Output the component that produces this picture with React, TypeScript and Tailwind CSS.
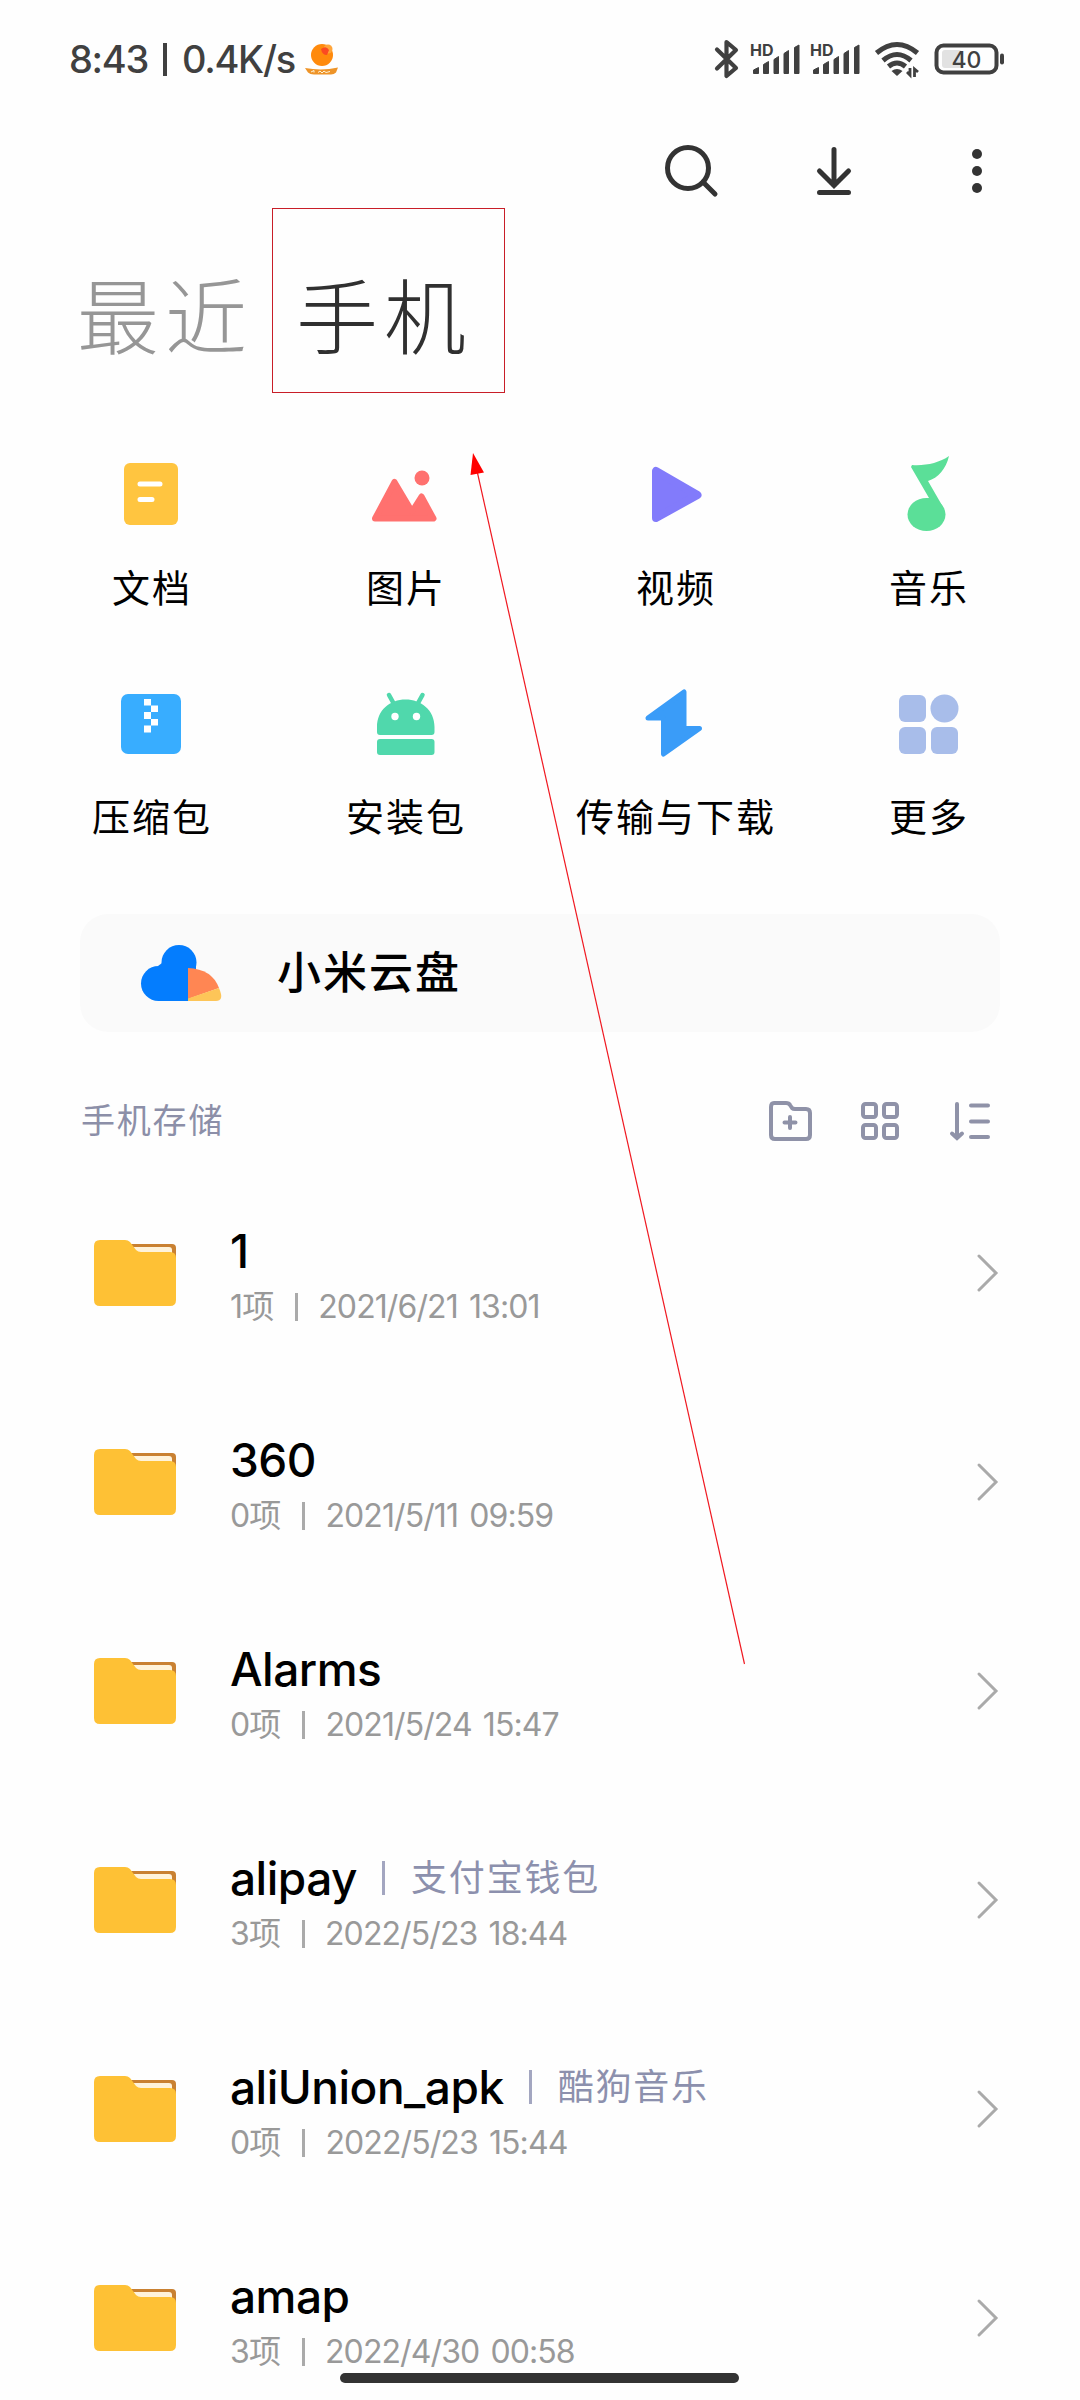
import type { ReactNode } from "react";

interface Category {
  label: string;
  icon: ReactNode;
}

interface Folder {
  name: string;
  count: string;
  date: string;
  tag?: string;
}

const categories: Category[] = [
  { label: "文档", icon: <DocIcon /> },
  { label: "图片", icon: <PictureIcon /> },
  { label: "视频", icon: <VideoIcon /> },
  { label: "音乐", icon: <MusicIcon /> },
  { label: "压缩包", icon: <ZipIcon /> },
  { label: "安装包", icon: <ApkIcon /> },
  { label: "传输与下载", icon: <TransferIcon /> },
  { label: "更多", icon: <MoreIcon /> },
];

const folders: Folder[] = [
  { name: "1", count: "1", date: "2021/6/21 13:01" },
  { name: "360", count: "0", date: "2021/5/11 09:59" },
  { name: "Alarms", count: "0", date: "2021/5/24 15:47" },
  { name: "alipay", count: "3", date: "2022/5/23 18:44", tag: "支付宝钱包" },
  { name: "aliUnion_apk", count: "0", date: "2022/5/23 15:44", tag: "酷狗音乐" },
  { name: "amap", count: "3", date: "2022/4/30 00:58" },
];

function DocIcon() {
  return (
    <svg width="72" height="76" viewBox="0 0 72 76">
      <rect x="9" y="7" width="54" height="62" rx="6" fill="#ffc540" />
      <path d="M25 28h20M25 43.500h12" stroke="#fff" strokeWidth="5" strokeLinecap="round" />
    </svg>
  );
}

function PictureIcon() {
  return (
    <svg width="72" height="76" viewBox="0 0 72 76">
      <circle cx="53" cy="22" r="7.500" fill="#ff716f" />
      <path
        d="M6 63 25.500 26.500 43 56 52.500 41 64.500 63Z"
        transform="translate(0 -.5)"
        fill="#ff716f"
        stroke="#ff716f"
        strokeWidth="6"
        strokeLinejoin="round"
      />
    </svg>
  );
}

function VideoIcon() {
  return (
    <svg width="72" height="76" viewBox="0 0 72 76">
      <path
        d="M17 15v47L58.500 39Z"
        fill="#827bfb"
        stroke="#827bfb"
        strokeWidth="8"
        strokeLinejoin="round"
      />
    </svg>
  );
}

function MusicIcon() {
  return (
    <svg width="72" height="76" viewBox="0 0 72 76">
      <path
        d="M20 9c13 1 27-2 37-9-3 13-11 22-21 25l15 26a19 17 0 0 1-5 18L30 44 37 42 19 11Z"
        fill="#5bdf98"
      />
      <ellipse cx="34.500" cy="58.500" rx="19" ry="16.500" fill="#5bdf98" />
    </svg>
  );
}

function ZipIcon() {
  return (
    <svg width="72" height="76" viewBox="0 0 72 76">
      <rect x="6" y="9" width="60" height="60" rx="7" fill="#38adff" />
      <path
        d="M29 14h7v6.500h-7zM36 20.500h7v6.500h-7zM29 27h7v7h-7zM36 34h7v6.500h-7zM29 40.500h7v7h-7z"
        fill="#fff"
      />
    </svg>
  );
}

function ApkIcon() {
  return (
    <svg width="72" height="76" viewBox="0 0 72 76">
      <path d="M20 10l5 9M53.500 10l-5 9" stroke="#50d8ac" strokeWidth="4.500" strokeLinecap="round" />
      <path
        d="M8 42C8 25 21 14.500 36.500 14.500S65.500 25 65.500 42v5a3 3 0 0 1-3 3H11a3 3 0 0 1-3-3Z"
        fill="#50d8ac"
      />
      <rect x="8" y="54" width="57.500" height="16" rx="3" fill="#50d8ac" />
      <circle cx="26" cy="31.500" r="3.700" fill="#fff" />
      <circle cx="47.500" cy="31.500" r="3.700" fill="#fff" />
    </svg>
  );
}

function TransferIcon() {
  return (
    <svg width="72" height="76" viewBox="0 0 72 76">
      <path
        d="M9 33 45 7 45 43.500 60.500 43.500 24.500 69 24.500 33Z"
        fill="#3a9cf8"
        stroke="#3a9cf8"
        strokeWidth="5"
        strokeLinejoin="round"
      />
    </svg>
  );
}

function MoreIcon() {
  return (
    <svg width="72" height="76" viewBox="0 0 72 76" fill="#a8bdea">
      <rect x="7" y="10" width="27" height="27" rx="6" />
      <circle cx="52.500" cy="23.500" r="14" />
      <rect x="7" y="42" width="27" height="27" rx="6" />
      <rect x="39" y="42" width="27" height="27" rx="6" />
    </svg>
  );
}

function SignalIcon() {
  return (
    <div className="relative h-10 w-[50px]">
      <span className="absolute top-[3px] left-0 text-[16px] leading-none font-bold">HD</span>
      <svg width="50" height="40" viewBox="0 0 50 40" fill="#404040">
        <path
          d="M3.500 31 8.500 28.500v6h-5zM13.500 25.500l5-3v12h-5zM24 20.500l4.500-3v17H24zM34 14.500l4.500-3v23H34zM44.500 8.500l4.500-2.500V34.500h-4.500z"
          stroke="#404040"
          strokeLinejoin="round"
        />
      </svg>
    </div>
  );
}

function StatusBar() {
  return (
    <div className="flex h-[118px] shrink-0 items-center pr-[75px] pl-[69px] text-[#404040]">
      <span className="text-[38px] leading-none font-medium tracking-[-1.300px]">8:43</span>
      <span className="mr-[15px] ml-[15px] h-[33px] w-[4px] bg-[#404040]" />
      <span className="text-[38px] leading-none font-medium tracking-[-1.300px]">0.4K/s</span>
      <svg className="ml-[10px]" width="34" height="34" viewBox="0 0 34 34">
        <circle cx="17" cy="13" r="11" fill="#ff8a0c" />
        <circle cx="23" cy="7" r="4.500" fill="#ffa53a" />
        <path d="M16 7q5-4 8 1l-2 5q-5 0-6-6Z" fill="#fb4a22" />
        <path d="M0 26q17 3 33-.5l-2 5q-2 2-5 2H9q-4 0-6-2Z" fill="#ee9428" />
        <path d="M6 30l3-1.500v2M13 30.500l2-1.500 2 2 2-2 2 1.500 4-1" stroke="#fff3d8" fill="none" />
      </svg>
      <div className="ml-auto flex items-center">
        <svg width="26" height="40" viewBox="0 0 26 40" fill="none">
          <path
            d="M3 10.500 22 29 12.500 37V3L22 11 3 29.500"
            stroke="#404040"
            strokeWidth="4.200"
            strokeLinejoin="round"
            strokeLinecap="round"
          />
        </svg>
        <div className="ml-[10px] flex gap-[10px]">
          <SignalIcon />
          <SignalIcon />
        </div>
        <svg className="ml-[13px]" width="48" height="40" viewBox="0 0 48 40" fill="none">
          <path
            d="M3.500 14Q24-3 44.500 14M10 21.500Q24 9.500 38 21.500M15.500 27.500Q24 20.500 32.500 27.500"
            stroke="#404040"
            strokeWidth="5"
          />
          <path d="M18.500 32Q24 28 29.500 32L24 37Z" fill="#404040" />
          <path d="M37 29v7l-3-3M41.500 38v-8l3.500 3" stroke="#404040" strokeWidth="2.800" />
        </svg>
        <svg className="ml-[12px]" width="72" height="40" viewBox="0 0 72 40" fill="none">
          <rect x="3.500" y="6.500" width="60" height="27" rx="7" stroke="#404040" strokeWidth="4" />
          <rect x="9" y="11" width="20" height="18" rx="3" fill="#e2e2e2" />
          <path d="M69 16.500v7" stroke="#404040" strokeWidth="4" strokeLinecap="round" />
          <text
            x="33.500"
            y="28.500"
            fontSize="23"
            fontWeight="500"
            textAnchor="middle"
            fill="#404040"
            className="font-['Inter']"
          >
            40
          </text>
        </svg>
      </div>
    </div>
  );
}

function Toolbar() {
  return (
    <div className="flex h-[106px] shrink-0 items-center justify-end gap-[75px] pr-[69px]">
      <svg width="68" height="68" viewBox="0 0 68 68" fill="none" stroke="#333" strokeWidth="5">
        <circle cx="31" cy="31" r="20.500" />
        <path d="M46 45 58 57" strokeLinecap="round" />
      </svg>
      <svg width="68" height="68" viewBox="0 0 68 68" fill="none" stroke="#333" strokeWidth="5">
        <path d="M34 12.500V48M19.500 34 34 48.500 48.500 34M19.500 55.500h29" strokeLinecap="round" />
      </svg>
      <svg width="68" height="68" viewBox="0 0 68 68" fill="#333">
        <circle cx="34" cy="17" r="5" />
        <circle cx="34" cy="34" r="5" />
        <circle cx="34" cy="51" r="5" />
      </svg>
    </div>
  );
}

function FolderIcon() {
  return (
    <svg width="82" height="66" viewBox="0 0 82 66">
      <path d="M34 4h44q4 0 4 4v12H42Z" fill="#c98132" />
      <path d="M38 7h37q3 0 3 3v6H42Z" fill="#fff3da" />
      <path
        d="M6 0h25q3 0 5 2l6 8q2 2 5 2h29q6 0 6 6v42q0 6-6 6H6q-6 0-6-6V6q0-6 6-6Z"
        fill="#fec135"
      />
    </svg>
  );
}

function FolderRow({ folder }: { folder: Folder }) {
  return (
    <div className="flex h-[209px] shrink-0 items-center pr-[80px] pl-[94px]">
      <FolderIcon />
      <div className="ml-[54px] flex flex-col pt-[5px]">
        <div className="flex h-[60px] items-center">
          <span className="text-[46px] leading-[60px] font-medium tracking-[-0.500px] text-black">
            {folder.name}
          </span>
          {folder.tag && (
            <>
              <span className="ml-[25px] h-[34px] w-[3px] bg-[#a3a6c0]" />
              <span className="ml-[26px] text-[36px] leading-none tracking-[1.800px] text-[#8c90ad]">
                {folder.tag}
              </span>
            </>
          )}
        </div>
        <div className="mt-[3px] flex h-[46px] items-center text-[32px] leading-none tracking-[-0.900px] text-[#999] [word-spacing:3px]">
          <span>{folder.count}项</span>
          <span className="mr-[20px] ml-[22px] h-[28px] w-[3px] bg-[#aaa]" />
          <span>{folder.date}</span>
        </div>
      </div>
      <svg className="ml-auto" width="24" height="40" viewBox="0 0 24 40" fill="none">
        <path d="M3 3 20 20 3 37" stroke="#aaa" strokeWidth="3" strokeLinecap="round" />
      </svg>
    </div>
  );
}

export default function App() {
  return (
    <div className="relative flex h-[2400px] w-[1080px] flex-col overflow-hidden bg-[#fefefe] font-['Inter','Noto_Sans_CJK_SC',sans-serif]">
      <StatusBar />
      <Toolbar />

      <div className="flex h-[190px] shrink-0 items-center pl-[77px] text-[82px] leading-none font-light tracking-[6px]">
        <span className="text-[#969696]">最近</span>
        <span className="ml-[43px] text-[#303030]">手机</span>
      </div>

      <div className="mt-[42px] grid shrink-0 grid-cols-[254px_254px_286px_220px] pl-[24px]">
        {categories.map((item) => (
          <div key={item.label} className="flex h-[229px] flex-col items-center">
            {item.icon}
            <span className="mt-[36px] pl-[2px] text-[38px] leading-[40px] tracking-[2px] whitespace-nowrap text-black">
              {item.label}
            </span>
          </div>
        ))}
      </div>

      <div className="mx-[80px] flex h-[118px] shrink-0 items-center rounded-[28px] bg-[#fafafa] pl-[60px]">
        <svg width="84" height="60" viewBox="0 0 84 60">
          <g fill="#047dfe">
            <circle cx="39" cy="19.500" r="17.500" />
            <circle cx="18.500" cy="40.500" r="17.500" />
            <path d="M18 23l4-3h34v8l-8 30H18Z" />
          </g>
          <path d="M48 25q24 1 31 20L48 56Z" fill="#ff8653" />
          <path d="M48 55.500 79 45q3 7 2 10-1 3-5 3H48Z" fill="#fdc558" />
        </svg>
        <span className="ml-[53px] text-[44px] leading-none font-medium tracking-[2px] text-black">
          小米云盘
        </span>
      </div>

      <div className="flex h-[178px] shrink-0 items-center pr-[86px] pl-[81px]">
        <span className="text-[34px] leading-none tracking-[1.800px] text-[#8c8fa8]">手机存储</span>
        <div className="ml-auto flex gap-[42px]">
          <svg width="48" height="48" viewBox="0 0 48 48" fill="none" stroke="#8f92a8" strokeWidth="4">
            <path
              d="M8 6h12q3 0 4 2l2 3q1 1 3 1h11q4 0 4 4v22q0 4-4 4H9q-4 0-4-4V10q0-4 3-4Z"
              strokeLinejoin="round"
            />
            <path d="M24 20v11M18.500 25.500h11" strokeLinecap="round" />
          </svg>
          <svg width="48" height="48" viewBox="0 0 48 48" fill="none" stroke="#8f92a8" strokeWidth="4">
            <rect x="7" y="7" width="13" height="13" rx="2.500" />
            <rect x="28" y="7" width="13" height="13" rx="2.500" />
            <rect x="7" y="28" width="13" height="13" rx="2.500" />
            <rect x="28" y="28" width="13" height="13" rx="2.500" />
          </svg>
          <svg
            width="48"
            height="48"
            viewBox="0 0 48 48"
            fill="none"
            stroke="#8f92a8"
            strokeWidth="4"
            strokeLinecap="round"
          >
            <path d="M11 7v33M6 36.500l5 4.500 5-4.500M25 8.500h17M25 24.500h17M25 40h17" />
          </svg>
        </div>
      </div>

      <div className="-mt-[42px] flex shrink-0 flex-col">
        {folders.map((folder) => (
          <FolderRow key={folder.name} folder={folder} />
        ))}
      </div>

      {/* gesture bar */}
      <div className="absolute top-[2373px] left-[340px] h-[10px] w-[399px] rounded-full bg-[#333]" />

      {/* annotation over the tab and list */}
      <div className="absolute top-[208px] left-[272px] h-[185px] w-[233px] border border-[#c81e28]" />
      <svg
        className="pointer-events-none absolute top-[450px] left-[460px]"
        width="300"
        height="1220"
        viewBox="460 450 300 1220"
      >
        <path d="M477.500 473 744.500 1664" stroke="#f01820" strokeWidth="1.200" />
        <path d="M473 453 484 472.500 470.500 475Z" fill="#f00" />
      </svg>
    </div>
  );
}
